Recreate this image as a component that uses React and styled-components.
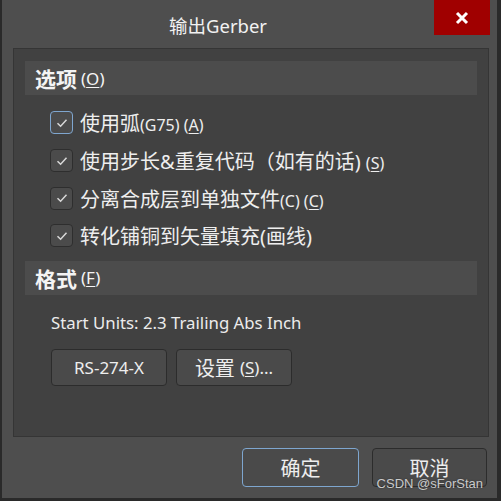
import React from "react";
import styled, { createGlobalStyle } from "styled-components";

const Global = createGlobalStyle`
  html, body { margin: 0; padding: 0; background: #4e4e4e; }
  body { font-family: "Noto Sans", "Noto Sans CJK SC", sans-serif; color: #efefef; }
`;

const Window = styled.div`
  position: relative;
  width: 501px;
  height: 501px;
  box-sizing: border-box;
  background: #4e4e4e;
  border-left: 2px solid #2a2a2a;
  border-right: 4px solid #2a2a2a;
  border-bottom: 3px solid #2a2a2a;
  display: flex;
  flex-direction: column;
`;

const TitleBar = styled.div`
  height: 48px;
  display: flex;
  align-items: flex-start;
`;

const Title = styled.div`
  flex: 1;
  height: 50px;
  display: flex;
  align-items: center;
  justify-content: center;
  font-size: 18.5px;
  color: #f2f2f2;
`;

const CloseButton = styled.div`
  width: 56px;
  height: 35px;
  background: #a00000;
  display: flex;
  align-items: center;
  justify-content: center;
  margin-right: 7px;
`;

const Panel = styled.div`
  margin: 0 8px 0 11px;
  height: 389px;
  box-sizing: border-box;
  background: #414141;
  border: 1px solid #353535;
  padding: 12px 11px 0 11px;
`;

const SectionHeader = styled.div`
  height: 34px;
  background: #4c4c4c;
  display: flex;
  align-items: center;
  padding-left: 10px;
  font-size: 21px;
  font-weight: 700;
  color: #f4f4f4;
`;

const Mnemonic = styled.span`
  font-size: ${(p) => p.$fs || 16}px;
  font-weight: ${(p) => (p.$bold ? 700 : 400)};
  margin-left: ${(p) => p.$gap || 0}px;
`;

const U = styled.span`
  text-decoration: underline;
  text-underline-offset: 2px;
`;

const Options = styled.div`
  padding: 9px 0 6px 25px;
  display: flex;
  flex-direction: column;
`;

const Row = styled.div`
  height: 37.7px;
  display: flex;
  align-items: center;
  gap: 7px;
  font-size: 20px;
  color: #eeeeee;
`;

const Box = styled.div`
  width: 23px;
  height: 23px;
  box-sizing: border-box;
  border-radius: 4px;
  border: 1px solid ${(p) => (p.$focus ? "#7fa6cf" : "#2e2e2e")};
  background: #4b4b4b;
  display: flex;
  align-items: center;
  justify-content: center;
`;

const Info = styled.div`
  padding: 16px 0 0 26px;
  height: 39px;
  font-size: 16.8px;
  color: #ececec;
  box-sizing: border-box;
  display: flex;
  align-items: center;
`;

const ButtonRow = styled.div`
  display: flex;
  gap: 9px;
  padding: 15px 0 0 26px;
`;

const Button = styled.div`
  width: ${(p) => p.$w || 116}px;
  height: ${(p) => p.$h || 37}px;
  box-sizing: border-box;
  border-radius: 4px;
  border: 1px solid ${(p) => (p.$focus ? "#7ea6cf" : "#2c2c2c")};
  background: #4a4a4a;
  display: flex;
  align-items: center;
  justify-content: center;
  font-size: ${(p) => p.$fs || 17}px;
  color: #eeeeee;
`;

const Footer = styled.div`
  display: flex;
  justify-content: flex-end;
  gap: 13px;
  padding: 11px 10px 0 0;
`;

const Watermark = styled.div`
  position: absolute;
  right: 14px;
  bottom: 7px;
  font-family: "Liberation Sans", Arial, sans-serif;
  font-size: 13px;
  color: rgba(230, 230, 230, 0.85);
  text-shadow: 0 0 2px rgba(0, 0, 0, 0.4);
`;

const Check = () => (
  <svg width="14" height="14" viewBox="0 0 14 14">
    <path d="M2.5 7.2 L5.6 10.2 L11.5 3.8" fill="none" stroke="#d8d8d8" strokeWidth="1.5" />
  </svg>
);

const CheckRow = ({ focus, children }) => (
  <Row>
    <Box $focus={focus}>
      <Check />
    </Box>
    <span>{children}</span>
  </Row>
);

export default function App() {
  return (
    <>
      <Global />
      <Window>
        <TitleBar>
          <Title>输出Gerber</Title>
          <CloseButton>
            <svg width="16" height="16" viewBox="0 0 16 16">
              <path d="M3 3 L13 13 M13 3 L3 13" stroke="#fff" strokeWidth="3" />
            </svg>
          </CloseButton>
        </TitleBar>
        <Panel>
          <SectionHeader>
            选项
            <Mnemonic $fs={17} $gap={4}>
              (<U>O</U>)
            </Mnemonic>
          </SectionHeader>
          <Options>
            <CheckRow focus>
              使用弧<Mnemonic>(G75) (<U>A</U>)</Mnemonic>
            </CheckRow>
            <CheckRow>
              使用步长&amp;重复代码（如有的话) <Mnemonic>(<U>S</U>)</Mnemonic>
            </CheckRow>
            <CheckRow>
              分离合成层到单独文件<Mnemonic>(C) (<U>C</U>)</Mnemonic>
            </CheckRow>
            <CheckRow>转化铺铜到矢量填充(画线)</CheckRow>
          </Options>
          <SectionHeader>
            格式
            <Mnemonic $fs={17} $gap={4}>
              (<U>F</U>)
            </Mnemonic>
          </SectionHeader>
          <Info>Start Units: 2.3 Trailing Abs Inch</Info>
          <ButtonRow>
            <Button>RS-274-X</Button>
            <Button $fs={20}>
              设置<Mnemonic $fs={17} $gap={5}>(<U>S</U>)...</Mnemonic>
            </Button>
          </ButtonRow>
        </Panel>
        <Footer>
          <Button $focus $w={117} $h={39} $fs={20}>确定</Button>
          <Button $w={115} $h={39} $fs={20}>取消</Button>
        </Footer>
        <Watermark>CSDN @sForStan</Watermark>
      </Window>
    </>
  );
}
